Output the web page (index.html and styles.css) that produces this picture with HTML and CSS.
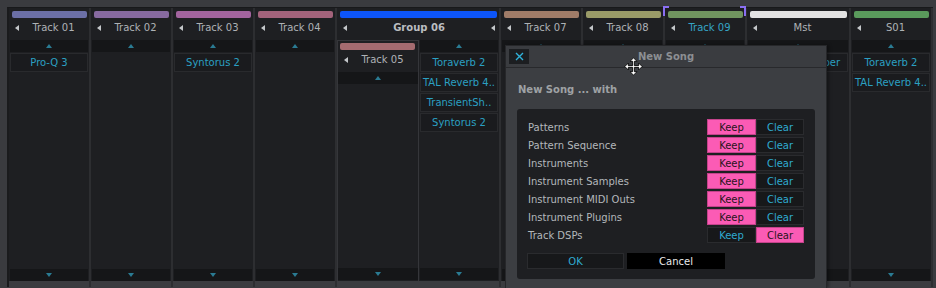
FILE: index.html
```html
<!DOCTYPE html>
<html lang="en">
<head>
    <meta charset="UTF-8">
    <title>Mixer - New Song</title>
    <link rel="stylesheet" href="styles.css">
</head>
<body>
    <div class="mixer">
        <div class="col">
            <div class="head"><div class="bar c01"></div><div class="name"><span class="tri"></span><span class="label">Track 01</span></div></div>
            <div class="strip"><i class="up"></i></div>
            <div class="dsps"><div class="slot">Pro-Q 3</div></div>
            <div class="strip"><i class="down"></i></div>
            <div class="foot"></div>
        </div>
        <div class="col">
            <div class="head"><div class="bar c02"></div><div class="name"><span class="tri"></span><span class="label">Track 02</span></div></div>
            <div class="strip"><i class="up"></i></div>
            <div class="dsps"></div>
            <div class="strip"><i class="down"></i></div>
            <div class="foot"></div>
        </div>
        <div class="col">
            <div class="head"><div class="bar c03"></div><div class="name"><span class="tri"></span><span class="label">Track 03</span></div></div>
            <div class="strip"><i class="up"></i></div>
            <div class="dsps"><div class="slot">Syntorus 2</div></div>
            <div class="strip"><i class="down"></i></div>
            <div class="foot"></div>
        </div>
        <div class="col">
            <div class="head"><div class="bar c04"></div><div class="name"><span class="tri"></span><span class="label">Track 04</span></div></div>
            <div class="strip"><i class="up"></i></div>
            <div class="dsps"></div>
            <div class="strip"><i class="down"></i></div>
            <div class="foot"></div>
        </div>

        <!-- group track: child track on the left, group DSP chain on the right -->
        <div class="col group">
            <div class="head"><div class="bar c06"></div><div class="name"><span class="tri"></span><span class="label bold">Group 06</span><span class="tri"></span></div></div>
            <div class="gbody">
                <div class="sub">
                    <div class="head inner"><div class="bar c05"></div><div class="name"><span class="tri"></span><span class="label">Track 05</span></div></div>
                    <div class="strip flush"><i class="up"></i></div>
                    <div class="dsps"></div>
                    <div class="strip flush"><i class="down"></i></div>
                </div>
                <div class="gdsp">
                    <div class="strip"><i class="up"></i></div>
                    <div class="dsps">
                        <div class="slot">Toraverb 2</div>
                        <div class="slot">TAL Reverb 4..</div>
                        <div class="slot">TransientSh..</div>
                        <div class="slot">Syntorus 2</div>
                    </div>
                    <div class="strip"><i class="down"></i></div>
                </div>
            </div>
            <div class="foot"></div>
        </div>

        <div class="col">
            <div class="head"><div class="bar c07"></div><div class="name"><span class="tri"></span><span class="label">Track 07</span></div></div>
            <div class="strip"><i class="up"></i></div>
            <div class="dsps"></div>
            <div class="strip"><i class="down"></i></div>
            <div class="foot"></div>
        </div>
        <div class="col">
            <div class="head"><div class="bar c08"></div><div class="name"><span class="tri"></span><span class="label">Track 08</span></div></div>
            <div class="strip"><i class="up"></i></div>
            <div class="dsps"></div>
            <div class="strip"><i class="down"></i></div>
            <div class="foot"></div>
        </div>
        <div class="col selected">
            <span class="corner left"></span><span class="corner right"></span>
            <div class="head"><div class="bar c09"></div><div class="name"><span class="tri"></span><span class="label">Track 09</span></div></div>
            <div class="strip"><i class="up"></i></div>
            <div class="dsps"></div>
            <div class="strip"><i class="down"></i></div>
            <div class="foot"></div>
        </div>
        <div class="col wide">
            <div class="head"><div class="bar mst"></div><div class="name"><span class="tri"></span><span class="label">Mst</span></div></div>
            <div class="strip"><i class="up"></i></div>
            <div class="dsps"><div class="slot">Reverb Chamber</div></div>
            <div class="strip"><i class="down"></i></div>
            <div class="foot"></div>
        </div>
        <div class="col">
            <div class="head"><div class="bar s01"></div><div class="name"><span class="tri"></span><span class="label">S01</span></div></div>
            <div class="strip"><i class="up"></i></div>
            <div class="dsps">
                <div class="slot">Toraverb 2</div>
                <div class="slot">TAL Reverb 4..</div>
            </div>
            <div class="strip"><i class="down"></i></div>
            <div class="foot"></div>
        </div>
    </div>

    <div class="dialog">
        <div class="dlg-title">
            <div class="close">
                <svg width="9" height="9" viewBox="0 0 9 9"><path d="M1 1 L8 8 M8 1 L1 8" stroke="#2fb3db" stroke-width="1.4"/></svg>
            </div>
            <div class="dlg-caption">New Song</div>
            <div class="close-spacer"></div>
        </div>
        <div class="dlg-body">
            <div class="dlg-heading">New Song ... with</div>
            <div class="panel">
                <div class="row"><span class="row-label">Patterns</span><span class="btn on">Keep</span><span class="btn">Clear</span></div>
                <div class="row"><span class="row-label">Pattern Sequence</span><span class="btn on">Keep</span><span class="btn">Clear</span></div>
                <div class="row"><span class="row-label">Instruments</span><span class="btn on">Keep</span><span class="btn">Clear</span></div>
                <div class="row"><span class="row-label">Instrument Samples</span><span class="btn on">Keep</span><span class="btn">Clear</span></div>
                <div class="row"><span class="row-label">Instrument MIDI Outs</span><span class="btn on">Keep</span><span class="btn">Clear</span></div>
                <div class="row"><span class="row-label">Instrument Plugins</span><span class="btn on">Keep</span><span class="btn">Clear</span></div>
                <div class="row"><span class="row-label">Track DSPs</span><span class="btn">Keep</span><span class="btn on">Clear</span></div>
                <div class="actions">
                    <span class="action ok">OK</span>
                    <span class="action cancel">Cancel</span>
                </div>
            </div>
        </div>
    </div>

    <svg class="cursor" width="19" height="19" viewBox="0 0 22 22">
        <polygon points="11,1 15,5 12,5 12,10 17,10 17,7 21,11 17,15 17,12 12,12 12,17 15,17 11,21 7,17 10,17 10,12 5,12 5,15 1,11 5,7 5,10 10,10 10,5 7,5" fill="#fff" stroke="#000" stroke-width="1"/>
    </svg>
</body>
</html>
```

FILE: styles.css
```css
* {
    margin: 0;
    padding: 0;
    box-sizing: border-box;
}

body {
    width: 936px;
    height: 288px;
    overflow: hidden;
    position: relative;
    background: #3a3b3f;
    font-family: "DejaVu Sans", "Liberation Sans", sans-serif;
    font-size: 10px;
}

/* mixer strip */

.mixer {
    display: flex;
    gap: 2px;
    width: fit-content;
    height: 280px;
    margin: 7px 0 0 7px;
    padding-right: 2px;
    border-top: 1px solid #18191b;
    border-left: 2px solid #1a1b1d;
    background: #2d2e31;
}

.col {
    position: relative;
    width: 80px;
    display: flex;
    flex-direction: column;
    background: #1e1f22;
}

.col.wide {
    width: 102px;
}

.col.group {
    width: 162px;
}

.head {
    height: 32px;
    padding-top: 3px;
}

.head.inner {
    height: 31px;
    padding-top: 2px;
}

.bar {
    height: 7px;
    margin: 0 2px 0 3px;
    border-radius: 2px;
}

.head.inner .bar {
    margin: 0 3px 0 2px;
}

.c01 { background: #6b6fa6; }
.c02 { background: #876aa0; }
.c03 { background: #a2649e; }
.c04 { background: #a3637b; }
.c05 { background: #a46b70; }
.c06 { background: #0d55f8; }
.c07 { background: #a07c68; }
.c08 { background: #9a9b68; }
.c09 { background: #719560; }
.mst { background: #e2e2e2; }
.s01 { background: #5a9a5c; }

.name {
    height: 18px;
    display: flex;
    align-items: center;
    padding: 1px 1px 0 6px;
}

.group > .head .name {
    padding-right: 4px;
}

.tri {
    width: 0;
    height: 0;
    border-top: 3px solid transparent;
    border-bottom: 3px solid transparent;
    border-right: 4px solid #c4c7ca;
}

.label {
    flex: 1;
    text-align: center;
    color: #aeb2b6;
    white-space: nowrap;
}

.label.bold {
    font-weight: bold;
    color: #babdc0;
}

.selected .label {
    color: #35a5c6;
}

.corner {
    position: absolute;
    top: -2px;
    width: 6px;
    height: 10px;
    border-top: 2px solid #8a6ff2;
}

.corner.left {
    left: -2px;
    border-left: 2px solid #8a6ff2;
}

.corner.right {
    right: -1px;
    border-right: 2px solid #8a6ff2;
}

.strip {
    height: 12px;
    margin: 0 1px;
    background: #151618;
    display: flex;
    align-items: center;
    justify-content: center;
}

.strip.flush {
    margin: 0;
}

.strip:last-of-type {
    margin-bottom: 1px;
}

.up {
    width: 0;
    height: 0;
    border-left: 3.5px solid transparent;
    border-right: 3.5px solid transparent;
    border-bottom: 4px solid #2a7b92;
}

.down {
    width: 0;
    height: 0;
    border-left: 3.5px solid transparent;
    border-right: 3.5px solid transparent;
    border-top: 4px solid #2a7b92;
}

.dsps {
    flex: 1;
    padding-top: 1px;
}

.slot {
    height: 19px;
    margin: 0 1px 1px;
    padding-top: 1px;
    border: 1px solid #292a2d;
    background: #1a1b1e;
    color: #2ba0c3;
    line-height: 16px;
    text-align: center;
    white-space: nowrap;
    overflow: hidden;
}

.foot {
    height: 6px;
    background: #3b3c40;
}

.gbody {
    flex: 1;
    display: flex;
}

.sub {
    width: 82px;
    display: flex;
    flex-direction: column;
    border: 1px solid #35363a;
    border-bottom: none;
}

.sub .strip:first-of-type {
    margin-top: 4px;
}

.gdsp {
    flex: 1;
    display: flex;
    flex-direction: column;
}

/* new song dialog */

.dialog {
    position: absolute;
    left: 505px;
    top: 45px;
    width: 322px;
    height: 243px;
    background: #3c3e42;
    border: 1px solid #26272a;
    border-bottom: none;
    box-shadow: 2px 0 3px rgba(0, 0, 0, 0.35);
}

.dlg-title {
    height: 22px;
    display: flex;
    align-items: center;
    background: #3a3c40;
    border-bottom: 1px solid #28292c;
}

.close {
    width: 20px;
    height: 15px;
    margin-left: 3px;
    background: #1c1e21;
    display: flex;
    align-items: center;
    justify-content: center;
}

.close-spacer {
    width: 23px;
}

.dlg-caption {
    flex: 1;
    text-align: center;
    font-weight: bold;
    color: #8c8f93;
}

.dlg-body {
    padding: 14px 0 0 11px;
}

.dlg-heading {
    height: 14px;
    line-height: 15px;
    padding-left: 1px;
    font-weight: bold;
    color: #9fa2a5;
    margin-bottom: 13px;
}

.panel {
    width: 298px;
    padding: 10px 11px 10px 11px;
    background: #1e1f22;
    border-radius: 3px;
}

.row {
    height: 16px;
    display: flex;
    margin-bottom: 2px;
}

.row-label {
    flex: 1;
    line-height: 17px;
    color: #b3b7bb;
}

.btn {
    width: 49px;
    height: 16px;
    line-height: 15px;
    text-align: center;
    background: #17181a;
    border: 1px solid #2a2b2e;
    color: #2faad0;
}

.btn + .btn {
    width: 48px;
}

.btn.on {
    background: #fb5bb5;
    border-color: #c4438b;
    color: #2a1420;
}

.actions {
    display: flex;
    gap: 3px;
    margin: 10px 0 0 -1px;
}

.action {
    width: 97px;
    height: 16px;
    line-height: 15px;
    text-align: center;
    border: 1px solid #2a2b2e;
}

.action.ok {
    background: #17181a;
    color: #2faad0;
}

.action.cancel {
    width: 98px;
    background: #000;
    border-color: #000;
    color: #eaeaea;
}

.cursor {
    position: absolute;
    left: 624px;
    top: 57px;
}
```
